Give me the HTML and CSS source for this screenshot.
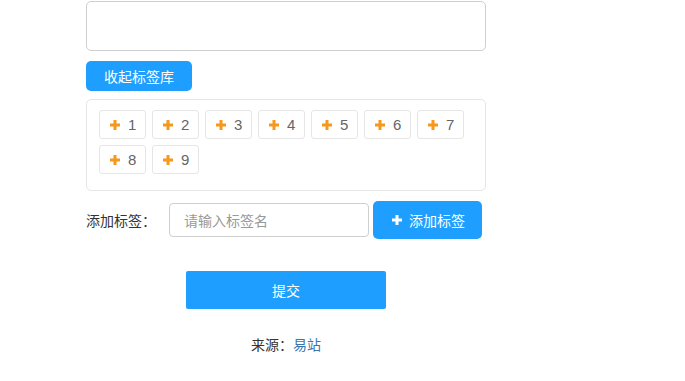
FILE: index.html
```html
<!DOCTYPE html>
<html lang="zh">
<head>
<meta charset="utf-8">
<title>标签</title>
<link rel="stylesheet" href="styles.css">
</head>
<body>
<div class="wrap">
  <textarea class="tags-area"></textarea>
  <button class="btn btn-sm">收起标签库</button>
  <div class="tag-lib">
    <span class="tag"><svg class="plus" viewBox="0 0 10 10"><path d="M5 0V10M0 5H10"/></svg>1</span>
    <span class="tag"><svg class="plus" viewBox="0 0 10 10"><path d="M5 0V10M0 5H10"/></svg>2</span>
    <span class="tag"><svg class="plus" viewBox="0 0 10 10"><path d="M5 0V10M0 5H10"/></svg>3</span>
    <span class="tag"><svg class="plus" viewBox="0 0 10 10"><path d="M5 0V10M0 5H10"/></svg>4</span>
    <span class="tag"><svg class="plus" viewBox="0 0 10 10"><path d="M5 0V10M0 5H10"/></svg>5</span>
    <span class="tag"><svg class="plus" viewBox="0 0 10 10"><path d="M5 0V10M0 5H10"/></svg>6</span>
    <span class="tag"><svg class="plus" viewBox="0 0 10 10"><path d="M5 0V10M0 5H10"/></svg>7</span>
    <span class="tag"><svg class="plus" viewBox="0 0 10 10"><path d="M5 0V10M0 5H10"/></svg>8</span>
    <span class="tag"><svg class="plus" viewBox="0 0 10 10"><path d="M5 0V10M0 5H10"/></svg>9</span>
  </div>
  <div class="add-row">
    <label class="add-label">添加标签：</label>
    <input class="add-input" type="text" placeholder="请输入标签名">
    <button class="btn btn-add"><svg class="plus-w" viewBox="0 0 10 10"><path d="M5 0V10M0 5H10"/></svg>添加标签</button>
  </div>
  <div class="submit-row">
    <button class="btn btn-submit">提交</button>
  </div>
  <p class="source">来源：<a href="#">易站</a></p>
</div>
</body>
</html>
```

FILE: styles.css
```css
html, body {
  margin: 0;
  padding: 0;
  background: #fff;
}
body {
  font-family: "Liberation Sans", "Noto Sans CJK SC", sans-serif;
  font-size: 14px;
  color: #333;
}
.wrap {
  width: 400px;
  margin-left: 86px;
  padding-top: 1px;
}
.tags-area {
  display: block;
  box-sizing: border-box;
  width: 400px;
  height: 50px;
  margin: 0;
  border: 1px solid #cfcfcf;
  border-radius: 5px;
  resize: none;
  outline: none;
}
.btn {
  border: none;
  background: #1e9fff;
  color: #fff;
  font-family: "Noto Sans CJK SC", "Liberation Sans", sans-serif;
  font-size: 14px;
  border-radius: 4px;
  cursor: pointer;
  padding: 0;
}
.btn-sm {
  display: block;
  margin-top: 10px;
  width: 106px;
  height: 30px;
  line-height: 30px;
  border-radius: 5px;
}
.tag-lib {
  box-sizing: border-box;
  margin-top: 8px;
  width: 400px;
  border: 1px solid #e6e6e6;
  border-radius: 5px;
  padding: 10px 12px 10px 12px;
  display: flex;
  flex-wrap: wrap;
}
.tag {
  box-sizing: border-box;
  width: 47px;
  height: 29px;
  margin: 0 6px 6px 0;
  border: 1px solid #e6e6e6;
  border-radius: 3px;
  display: flex;
  align-items: center;
  padding-left: 10px;
  color: #666;
  font-family: "Liberation Sans", sans-serif;
  font-size: 15px;
}
.plus {
  flex: none;
  width: 10px;
  height: 10px;
  margin-right: 8px;
  stroke: #f7971b;
  stroke-width: 3;
  fill: none;
}
.add-row {
  display: flex;
  align-items: center;
  margin-top: 10px;
}
.add-label {
  width: 83px;
  font-family: "Noto Sans CJK SC", sans-serif;
  font-size: 14px;
  color: #333;
}
.add-input {
  box-sizing: border-box;
  width: 200px;
  height: 34px;
  border: 1px solid #cfcfcf;
  border-radius: 4px;
  padding: 0 0 0 14px;
  margin: 0;
  font-family: "Noto Sans CJK SC", sans-serif;
  font-size: 14px;
  outline: none;
}
.add-input::placeholder {
  color: #999;
}
.btn-add {
  margin-left: 4px;
  width: 109px;
  height: 38px;
  display: flex;
  align-items: center;
  padding-left: 19px;
  box-sizing: border-box;
  border-radius: 5px;
}
.plus-w {
  flex: none;
  width: 10px;
  height: 10px;
  margin-right: 7px;
  stroke: #fff;
  stroke-width: 3;
  fill: none;
}
.submit-row {
  display: flex;
  justify-content: center;
  margin-top: 32px;
}
.btn-submit {
  width: 200px;
  height: 38px;
  border-radius: 2px;
}
.source {
  margin: 25px 0 0;
  text-align: center;
  line-height: 20px;
  font-family: "Noto Sans CJK SC", sans-serif;
  font-size: 14px;
  color: #333;
}
.source a {
  color: #3a75ad;
  text-decoration: none;
}
```
